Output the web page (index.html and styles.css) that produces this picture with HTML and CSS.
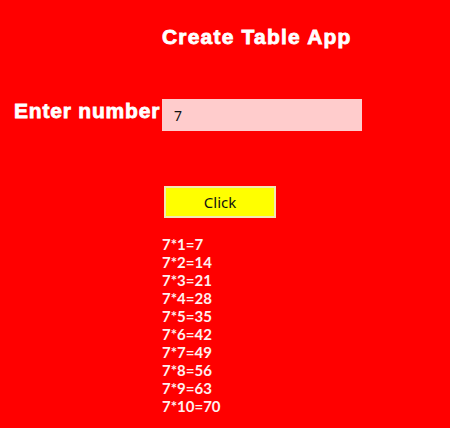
FILE: index.html
```html
<!DOCTYPE html>
<html>
<head>
<meta charset="utf-8">
<link rel="stylesheet" href="styles.css">
</head>
<body>
<div class="app">
  <div class="spacer"></div>
  <h1 class="title">Create Table App</h1>
  <label class="label" for="num">Enter number</label>
  <input class="input" id="num" type="text" value="7">
  <div class="spacer"></div>
  <div class="btn-cell"><button class="btn">Click</button></div>
  <div class="spacer"></div>
  <div class="list">
    <div>7*1=7</div>
    <div>7*2=14</div>
    <div>7*3=21</div>
    <div>7*4=28</div>
    <div>7*5=35</div>
    <div>7*6=42</div>
    <div>7*7=49</div>
    <div>7*8=56</div>
    <div>7*9=63</div>
    <div>7*10=70</div>
  </div>
</div>
</body>
</html>
```

FILE: styles.css
```css
html, body {
  margin: 0;
  padding: 0;
  background: #ff0000;
  height: 100%;
}
.app {
  display: grid;
  grid-template-columns: 162px 200px;
  align-items: start;
}
.title {
  margin: 25px 0 0 0;
  font-family: "Liberation Sans", Arial, sans-serif;
  font-weight: bold;
  font-size: 21px;
  line-height: 24px;
  letter-spacing: 1.2px;
  color: #ffffff;
  -webkit-text-stroke: 0.8px #ffffff;
  white-space: nowrap;
}
.label {
  margin-top: 50px;
  padding-left: 14px;
  font-family: "Liberation Sans", Arial, sans-serif;
  font-weight: bold;
  font-size: 21px;
  line-height: 24px;
  letter-spacing: 0.8px;
  color: #ffffff;
  -webkit-text-stroke: 0.8px #ffffff;
  white-space: nowrap;
}
.input {
  margin-top: 50px;
  box-sizing: border-box;
  width: 200px;
  height: 32px;
  border: none;
  outline: none;
  background: #ffcccc;
  padding: 0 0 0 12px;
  font-family: "Noto Sans", sans-serif;
  font-size: 14px;
  color: #111111;
}
.btn-cell {
  margin-top: 55px;
  padding-left: 2px;
}
.btn {
  box-sizing: border-box;
  width: 112px;
  height: 32px;
  background: #ffff00;
  border: 2px solid #f3e6b4;
  font-family: "Noto Sans", sans-serif;
  font-size: 15px;
  color: #111111;
  padding: 0;
}
.list {
  margin-top: 17px;
  font-family: Lato, "Noto Sans", sans-serif;
  font-weight: bold;
  font-size: 15px;
  line-height: 18px;
  color: #fff0f0;
}
```
